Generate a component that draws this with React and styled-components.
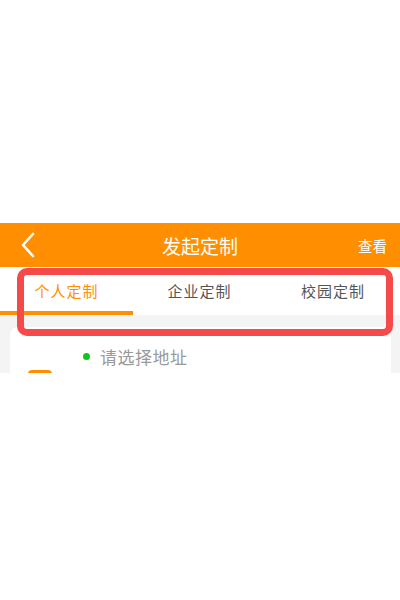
import React, { useState } from "react";
import styled, { createGlobalStyle } from "styled-components";

const GlobalStyle = createGlobalStyle`
  html, body {
    margin: 0;
    padding: 0;
    background: #ffffff;
    font-family: "Noto Sans CJK SC", "Noto Sans", sans-serif;
  }
`;

const tabs = ["个人定制", "企业定制", "校园定制"];

function App() {
  const [active, setActive] = useState(0);
  return (
    <Page>
      <GlobalStyle />
      <TopSpace />
      <Header>
        <BackButton aria-label="back">
          <svg width="16" height="26" viewBox="0 0 16 26">
            <path
              d="M13 2 L3 13 L13 24"
              fill="none"
              stroke="#fff"
              strokeWidth="2.6"
              strokeLinecap="round"
              strokeLinejoin="round"
            />
          </svg>
        </BackButton>
        <Title>发起定制</Title>
        <HeaderLink>查看</HeaderLink>
      </Header>
      <TabBar>
        {tabs.map((t, i) => (
          <Tab key={t} $active={i === active} onClick={() => setActive(i)}>
            {t}
          </Tab>
        ))}
      </TabBar>
      <Body>
        <Card>
          <AddressRow>
            <Dot />
            <AddressText>请选择地址</AddressText>
          </AddressRow>
          <Badge />
        </Card>
      </Body>
      <Highlight />
    </Page>
  );
}

const Page = styled.div`
  position: relative;
  width: 400px;
  height: 600px;
  background: #ffffff;
  overflow: hidden;
`;

const TopSpace = styled.div`
  height: 223px;
`;

const Header = styled.div`
  height: 44px;
  background: #ff8f00;
  display: flex;
  align-items: center;
  padding: 0 13px 0 20px;
`;

const BackButton = styled.div`
  width: 40px;
  display: flex;
  align-items: center;
`;

const Title = styled.div`
  flex: 1;
  text-align: center;
  color: #ffffff;
  font-size: 19px;
  padding-top: 1px;
`;

const HeaderLink = styled.div`
  width: 47px;
  text-align: right;
  color: #ffffff;
  font-size: 14.5px;
`;

const TabBar = styled.div`
  display: grid;
  grid-template-columns: 133px 133px 134px;
  height: 48px;
  background: #ffffff;
`;

const Tab = styled.div`
  display: flex;
  align-items: center;
  justify-content: center;
  font-size: 15px;
  letter-spacing: 1px;
  color: ${(p) => (p.$active ? "#ff8f00" : "#555555")};
  border-bottom: 4px solid ${(p) => (p.$active ? "#ff8f00" : "transparent")};
  box-sizing: border-box;
  padding-top: 3px;
`;

const Body = styled.div`
  height: 58px;
  background: #f4f4f4;
  padding: 12px 9px 0 10px;
  box-sizing: border-box;
  overflow: hidden;
`;

const Card = styled.div`
  background: #ffffff;
  border-radius: 8px 8px 0 0;
  height: 80px;
  padding: 18px 0 0 73px;
  box-sizing: border-box;
`;

const AddressRow = styled.div`
  display: flex;
  align-items: center;
  gap: 10px;
  height: 22px;
`;

const Dot = styled.span`
  width: 7px;
  height: 7px;
  border-radius: 50%;
  background: #14c41e;
`;

const AddressText = styled.span`
  color: #999999;
  font-size: 17px;
  letter-spacing: 0.5px;
`;

const Badge = styled.div`
  margin: 3px 0 0 -55px;
  width: 24px;
  height: 16px;
  border-radius: 4px;
  background: #ff8f00;
`;

const Highlight = styled.div`
  position: absolute;
  left: 17px;
  top: 268px;
  width: 376px;
  height: 68px;
  box-sizing: border-box;
  border: 7px solid #f54a4a;
  border-radius: 10px;
  pointer-events: none;
`;

export default App;
